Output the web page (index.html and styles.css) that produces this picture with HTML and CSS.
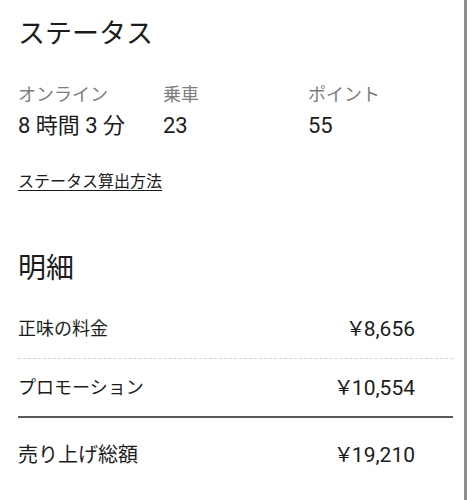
FILE: index.html
```html
<!DOCTYPE html>
<html lang="ja">
<head>
<meta charset="utf-8">
<link rel="stylesheet" href="styles.css">
</head>
<body>
<div class="page">
  <h1 class="heading">ステータス</h1>
  <div class="stats">
    <div class="stat">
      <div class="stat-label">オンライン</div>
      <div class="stat-value">8 時間 3 分</div>
    </div>
    <div class="stat">
      <div class="stat-label">乗車</div>
      <div class="stat-value">23</div>
    </div>
    <div class="stat">
      <div class="stat-label">ポイント</div>
      <div class="stat-value">55</div>
    </div>
  </div>
  <a class="link" href="#">ステータス算出方法</a>
  <h2 class="heading heading-detail">明細</h2>
  <div class="rows">
    <div class="row row-dashed">
      <span class="row-label">正味の料金</span>
      <span class="row-amount"><span class="yen">￥</span>8,656</span>
    </div>
    <div class="row row-solid">
      <span class="row-label">プロモーション</span>
      <span class="row-amount"><span class="yen">￥</span>10,554</span>
    </div>
    <div class="row row-total">
      <span class="row-label">売り上げ総額</span>
      <span class="row-amount"><span class="yen">￥</span>19,210</span>
    </div>
  </div>
</div>
</body>
</html>
```
FILE: styles.css
```css
* { box-sizing: border-box; }
html, body { margin: 0; padding: 0; background: #fff; }
body {
  font-family: Roboto, "Noto Sans CJK JP", sans-serif;
  color: #1c1c1c;
}
.page {
  width: 467px;
  min-height: 500px;
  padding: 16px 11px 0 18px;
  border-right: 3px solid #8e8e8e;
}
.heading {
  margin: 0;
  font-size: 27px;
  line-height: 36px;
  font-weight: 400;
}
.stats {
  margin-top: 31px;
  display: grid;
  grid-template-columns: 145px 145px 145px;
}
.stat { display: flex; flex-direction: column; gap: 5px; }
.stat-label {
  font-size: 18px;
  line-height: 24px;
  color: #7d7d7d;
}
.stat-value {
  font-size: 22px;
  line-height: 28px;
}
.link {
  display: inline-block;
  margin-top: 30px;
  font-size: 16px;
  line-height: 24px;
  color: #1c1c1c;
  text-decoration: underline;
  text-underline-offset: 3px;
}
.heading-detail { margin-top: 57px; font-size: 28px; }
.rows { margin-top: 13px; }
.row {
  display: flex;
  justify-content: space-between;
  align-items: center;
  padding: 15px 38px 15px 0;
}
.row-label { font-size: 18px; line-height: 28px; }
.row-amount { font-size: 21px; line-height: 28px; }
.yen {
  font-family: "Noto Sans CJK JP", sans-serif;
  font-size: 20px;
  line-height: 1;
  margin-right: -2px;
}
.row-dashed { border-bottom: 1px dashed #d2d2d2; }
.row-solid { padding-bottom: 14px; border-bottom: 2px solid #5a5a5a; }
.row-total { padding-top: 23px; }
.row-total .row-label { font-size: 20px; }
```
